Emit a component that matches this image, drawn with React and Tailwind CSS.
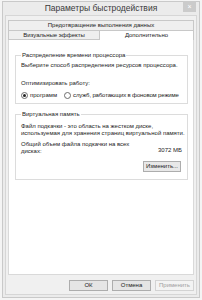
const font = { fontFamily: "'Liberation Sans', Arial, sans-serif" };

function Radio({ checked, label, tight }) {
  return (
    <label className="flex items-center gap-[2px] whitespace-nowrap">
      <span className="w-[7px] h-[7px] shrink-0 rounded-full border border-[#6d6d6d] bg-white flex items-center justify-center">
        {checked && <span className="w-[3px] h-[3px] rounded-full bg-[#222]" />}
      </span>
      <span className={tight ? "tracking-[-0.15px]" : ""}>{label}</span>
    </label>
  );
}

function Button({ children, disabled }) {
  return (
    <button
      className={
        disabled
          ? "w-[39px] h-[11px] border border-[#d3d3d3] bg-[#f3f3f3] text-[#a0a0a0] leading-[9px]"
          : "w-[39px] h-[11px] border border-[#adadad] bg-[#e5e5e5] text-[#222] leading-[9px]"
      }
    >
      {children}
    </button>
  );
}

export default function App() {
  return (
    <div
      className="w-[202px] h-[300px] bg-[#f4f4f4] px-[2px] pt-[1px] pb-[2px] text-[6px] leading-[7px] text-[#222] whitespace-nowrap"
      style={font}
    >
      <div className="h-full border border-[#c9c9c9] bg-[#ebebeb] flex flex-col">
        {/* Title bar */}
        <div className="relative h-[13px] flex justify-center pt-[1px]">
          <span className="text-[8.5px] leading-[10px] text-[#3a3a3a]">Параметры быстродействия</span>
          <span className="absolute right-[3px] top-[-1px] w-[13px] h-[11px] bg-[#cbcbcb] text-white text-[7px] leading-[11px] text-center">
            ×
          </span>
        </div>

        {/* Client area */}
        <div className="flex-1 mx-[2px] mb-[2px] border border-[#d6d6d6] bg-[#f0f0f0] px-[2px] pt-[4px] flex flex-col">
          {/* Tabs */}
          <div className="h-[10px] border border-[#c8c8c8] border-b-0 bg-[#efefef] flex items-center justify-center">
            Предотвращение выполнения данных
          </div>
          <div className="flex h-[10px]">
            <div className="w-[92px] border border-[#c8c8c8] bg-[#efefef] flex items-center justify-center">
              Визуальные эффекты
            </div>
            <div className="flex-1 border border-[#c8c8c8] border-l-0 border-b-0 bg-white flex items-center justify-center">
              Дополнительно
            </div>
          </div>

          {/* Panel */}
          <div className="h-[235px] border border-[#d9d9d9] border-t-0 bg-white pl-[6px] pr-[5px] pt-[12px]">
            <fieldset className="border border-[#dcdcdc] px-[5px] pb-[4px] min-w-0">
              <legend className="px-[1px]">Распределение времени процессора</legend>
              <p className="mt-[3px]">Выберите способ распределения ресурсов процессора.</p>
              <p className="mt-[11px]">Оптимизировать работу:</p>
              <div className="mt-[5px] flex gap-[7px]">
                <Radio checked label="программ" />
                <Radio tight label="служб, работающих в фоновом режиме" />
              </div>
            </fieldset>

            <fieldset className="mt-[7px] border border-[#dcdcdc] px-[5px] pb-[7px] min-w-0">
              <legend className="px-[1px]">Виртуальная память</legend>
              <p className="mt-[5px] leading-[6.5px]">
                Файл подкачки - это область на жестком диске,
                <br />
                используемая для хранения страниц виртуальной памяти.
              </p>
              <div className="mt-[5px] flex items-end">
                <p className="w-[125px] leading-[6.5px]">
                  Общий объем файла подкачки на всех
                  <br />
                  дисках:
                </p>
                <span className="ml-[12px]">3072 МБ</span>
              </div>
              <div className="mt-[7px] flex justify-end pr-[1px]">
                <button className="w-[38px] h-[11px] border border-[#adadad] bg-[#e8e8e8] leading-[9px]">
                  Изменить...
                </button>
              </div>
            </fieldset>
          </div>

          {/* Dialog buttons */}
          <div className="mt-[5px] flex justify-end gap-[4px]">
            <Button>ОК</Button>
            <Button>Отмена</Button>
            <Button disabled>Применить</Button>
          </div>
        </div>
      </div>
    </div>
  );
}
